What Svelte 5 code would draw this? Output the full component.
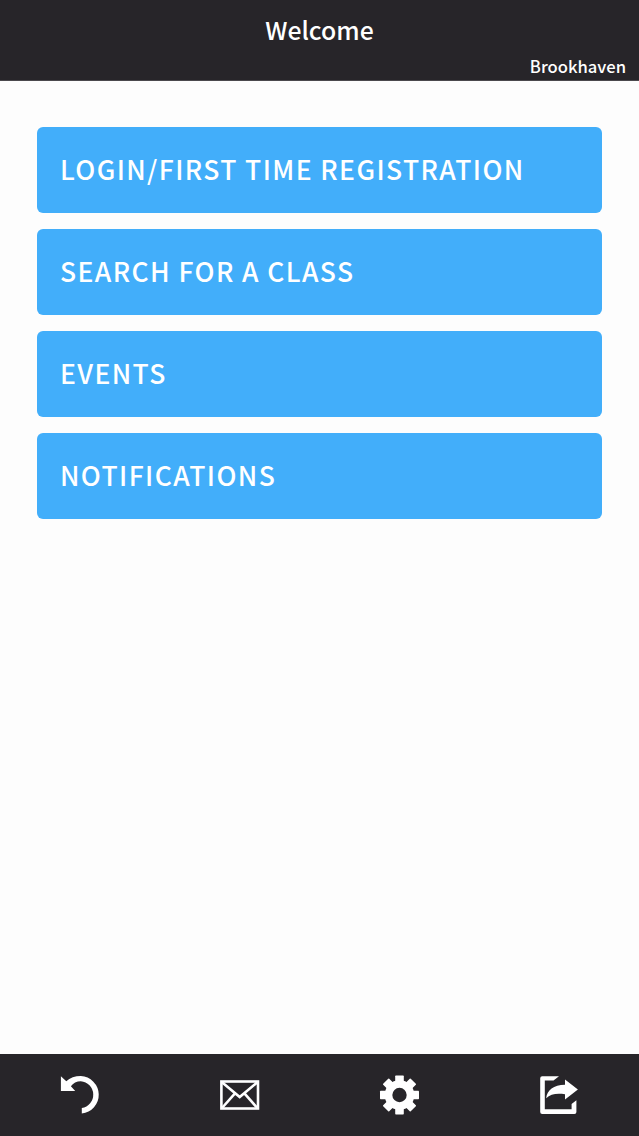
<script lang="ts">
	const campus = "Brookhaven";

	// Main menu entries, top to bottom
	const menuItems: string[] = [
		"LOGIN/FIRST TIME REGISTRATION",
		"SEARCH FOR A CLASS",
		"EVENTS",
		"NOTIFICATIONS"
	];

	// Angles of the gear teeth
	const teeth = [0, 45, 90, 135];
</script>

<svelte:head>
	<title>Welcome</title>
</svelte:head>

<div class="screen">
	<header>
		<h1>Welcome</h1>
		<p class="campus">{campus}</p>
	</header>

	<main>
		{#each menuItems as item (item)}
			<button class="menuButton"><span>{item}</span></button>
		{/each}
	</main>

	<!-- bottom toolbar -->
	<footer>
		<button class="tool" aria-label="Back">
			<svg width="40" height="40" viewBox="0 0 40 40">
				<path d="M6.3 6.2 C10 3 15 1.1 20.8 1.1 A18.7 18.7 0 0 1 21.8 38.4 V33 A13.5 13.5 0 0 0 20.8 6.2 C16.8 6.2 13 8 10.9 11.3 L15.2 15.9 H0.9 V1.2 Z" fill="#fff" />
			</svg>
		</button>
		<button class="tool" aria-label="Messages">
			<svg width="40" height="40" viewBox="0 0 40 40">
				<g fill="none" stroke="#fff" stroke-width="2.6">
					<rect x="1.4" y="6.5" width="36.6" height="27" />
					<path d="M2 7.2 L19.7 22 L37.4 7.2 M2 33 L15 18.4 M37.4 33 L24.4 18.4" />
				</g>
			</svg>
		</button>
		<button class="tool" aria-label="Settings">
			<svg width="40" height="40" viewBox="0 0 40 40">
				<g fill="#fff">
					{#each teeth as angle (angle)}
						<rect x="16.2" y="0.5" width="8.6" height="39" rx="0.7" transform="rotate({angle} 20.5 20)" />
					{/each}
					<circle cx="20.5" cy="20" r="14.8" />
				</g>
				<circle cx="20.5" cy="20" r="7.2" fill="#272529" />
			</svg>
		</button>
		<button class="tool" aria-label="Share">
			<svg width="40" height="40" viewBox="0 0 40 40">
				<path d="M20 1.2 L14.5 5.6 H5.8 V34.2 H32.6 V29 L37.4 25.3 V37 Q37.4 39 35.4 39 H3.2 Q1.2 39 1.2 37 V3.2 Q1.2 1.2 3.2 1.2 Z" fill="#fff" />
				<path d="M26 4.6 L38.9 14.4 L26 24.4 V19.2 C17.5 18 11.5 19 7.2 23.2 C8 15.5 14.5 9.8 26 9.8 Z" fill="#fff" />
			</svg>
		</button>
	</footer>
</div>

<style>
	:global(body) {
		margin: 0;
	}

	.screen {
		display: flex;
		flex-direction: column;
		height: 1136px;
		background-color: #fdfdfd;
		font-family: "Noto Sans CJK SC", "Noto Sans", sans-serif;
		color: #fff;
	}

	header {
		box-sizing: border-box;
		height: 81px;
		padding: 11px 13px 0;
		background-color: #272529;
		border-bottom: 1px solid #4b494d;
	}

	h1 {
		margin: 0;
		text-align: center;
		font-size: 24.8px;
		font-weight: 500;
		line-height: 36px;
	}

	.campus {
		margin: 7px 0 0;
		text-align: right;
		font-size: 16.6px;
		font-weight: 500;
		line-height: 24px;
	}

	main {
		display: flex;
		flex-direction: column;
		flex: 1;
		gap: 15.5px;
		padding: 46px 37px 0;
	}

	button {
		margin: 0;
		border: none;
		color: inherit;
		font-family: inherit;
		cursor: pointer;
	}

	.menuButton {
		height: 86.4px;
		padding: 0 23px 2px;
		background-color: #42aefa;
		border-radius: 6px;
		text-align: left;
		font-size: 26.5px;
		font-weight: 500;
		line-height: 40px;
		letter-spacing: 1.4px;
	}

	footer {
		display: flex;
		height: 82px;
		background-color: #272529;
	}

	.tool {
		display: flex;
		justify-content: center;
		align-items: center;
		flex: 1;
		padding: 0;
		background: none;
	}
</style>
